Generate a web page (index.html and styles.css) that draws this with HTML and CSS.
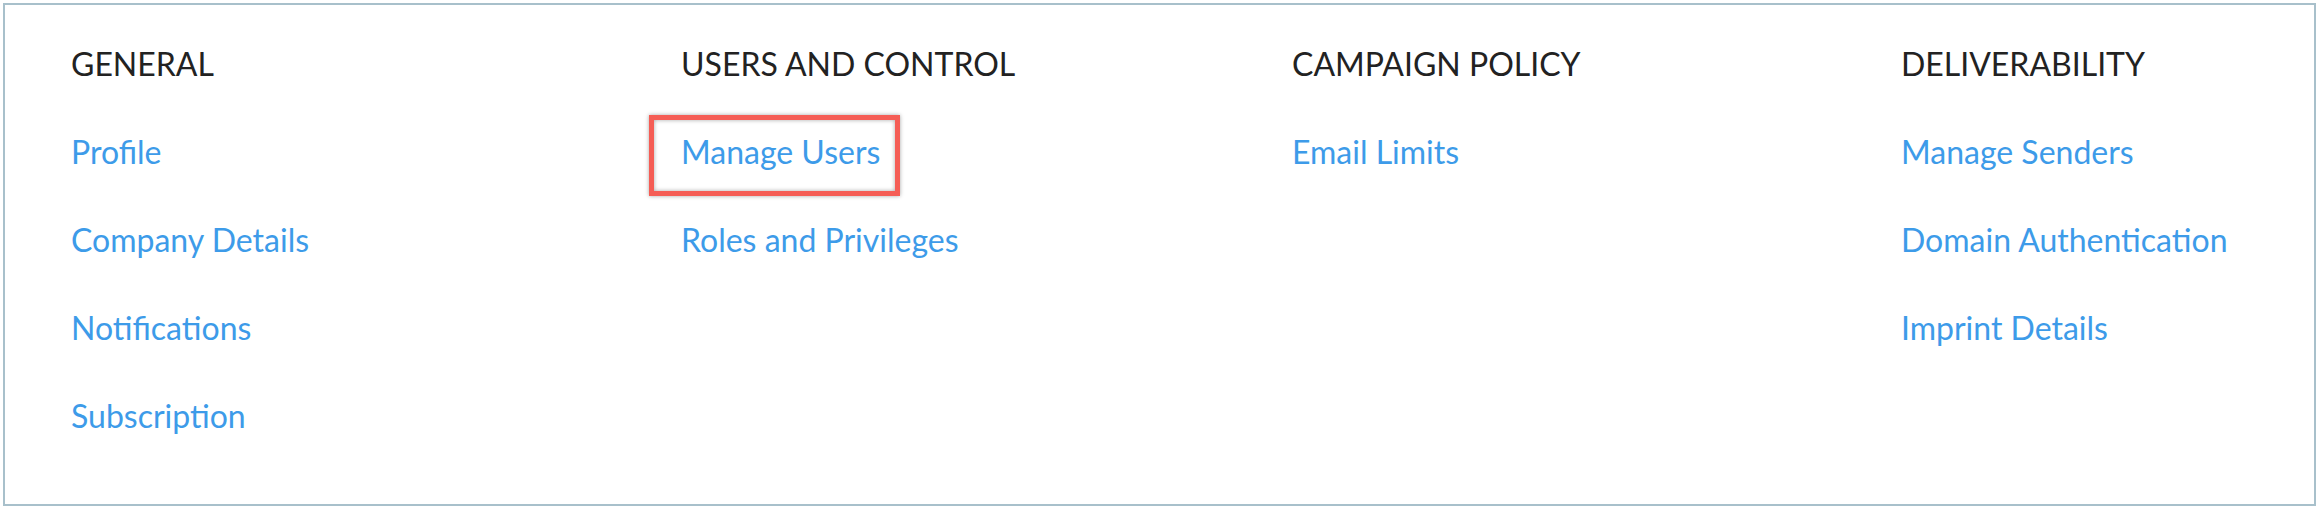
FILE: index.html
```html
<!DOCTYPE html>
<html lang="en">
<head>
<meta charset="utf-8">
<title>Settings</title>
<link rel="stylesheet" href="styles.css">
</head>
<body>
<div class="panel">
  <section class="col">
    <h2 class="col-title">GENERAL</h2>
    <ul class="links">
      <li><a class="link" href="#">Profile</a></li>
      <li><a class="link" href="#">Company Details</a></li>
      <li><a class="link" href="#">Notifications</a></li>
      <li><a class="link" href="#">Subscription</a></li>
    </ul>
  </section>
  <section class="col">
    <h2 class="col-title">USERS AND CONTROL</h2>
    <ul class="links">
      <li><a class="link highlighted" href="#">Manage Users</a></li>
      <li><a class="link" href="#">Roles and Privileges</a></li>
    </ul>
  </section>
  <section class="col">
    <h2 class="col-title">CAMPAIGN POLICY</h2>
    <ul class="links">
      <li><a class="link" href="#">Email Limits</a></li>
    </ul>
  </section>
  <section class="col">
    <h2 class="col-title">DELIVERABILITY</h2>
    <ul class="links">
      <li><a class="link" href="#">Manage Senders</a></li>
      <li><a class="link" href="#">Domain Authentication</a></li>
      <li><a class="link" href="#">Imprint Details</a></li>
    </ul>
  </section>
</div>
</body>
</html>
```
FILE: styles.css
```css
*, *::before, *::after { box-sizing: border-box; }
html, body { background: #ffffff; }
body {
  margin: 3px 4px 4px 3px;
  font-family: Lato, "Open Sans", sans-serif;
}
.panel {
  height: 503px;
  border: 2px solid #a8c0cb;
  background: #fff;
  padding: 40px 0 0 66px;
  display: grid;
  grid-template-columns: 610px 611px 609px 1fr;
  align-items: start;
}
.col-title {
  margin: 0;
  font-size: 32px;
  line-height: 1.2;
  font-weight: 400;
  color: #222222;
}
.links {
  list-style: none;
  margin: 25px 0 0 0;
  padding: 0;
}
.links li {
  line-height: 88px;
  height: 88px;
}
.link {
  font-size: 32px;
  color: #3d9be9;
  text-decoration: none;
  position: relative;
  display: inline-block;
  line-height: 88px;
  vertical-align: top;
}
.highlighted::after {
  content: "";
  position: absolute;
  left: -32px;
  top: 7px;
  width: 251px;
  height: 81px;
  border: 5px solid #f55d55;
  box-shadow: 0 0 4px rgba(0, 0, 0, 0.35), inset 0 0 4px rgba(0, 0, 0, 0.35);
}
```
